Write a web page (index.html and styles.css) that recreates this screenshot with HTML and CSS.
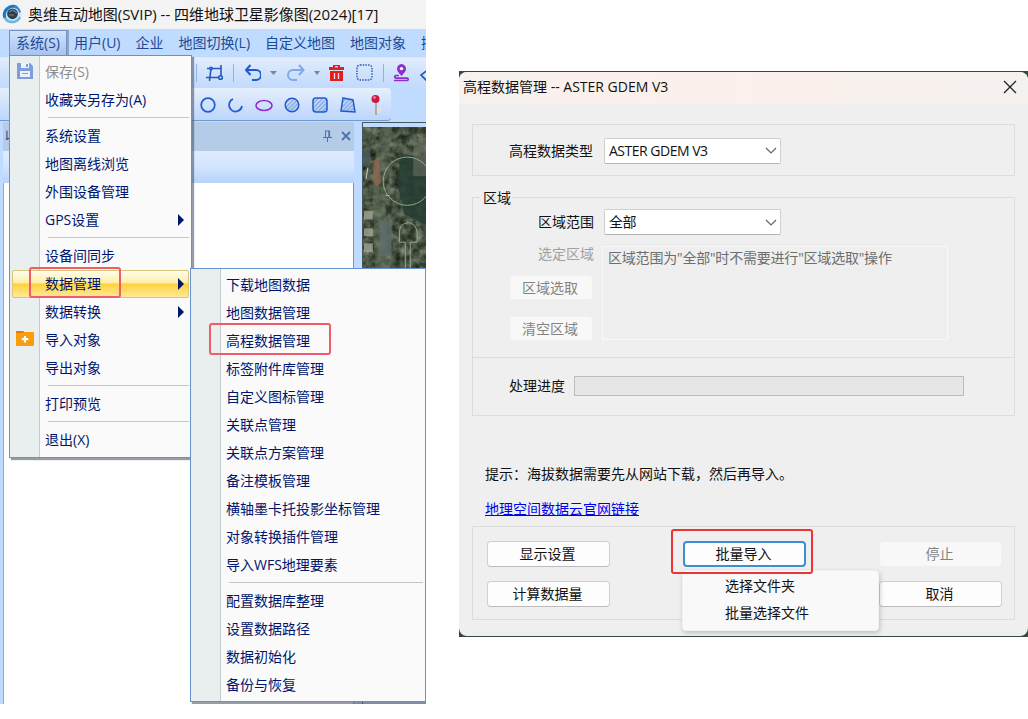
FILE: index.html
```html
<!DOCTYPE html>
<html lang="zh-CN">
<head>
  <meta charset="UTF-8" />
  <title>奥维互动地图</title>
  <link rel="stylesheet" href="styles.css">
</head>
<body>

  <div class="app">
    <header class="titlebar">
      <svg class="logo" width="20" height="20" viewBox="0 0 20 20">
        <circle cx="10" cy="10" r="9.5" fill="#d5e6f2"/>
        <path d="M15 3.500A8.500 8.500 0 0 0 3 14" fill="none" stroke="#1878c8" stroke-width="3"/>
        <path d="M3 14a8.500 8.500 0 0 0 15-1" fill="none" stroke="#69b7e5" stroke-width="2.500"/>
        <path d="M12 2.500q5 1 6 6" fill="none" stroke="#2c8bd2" stroke-width="2"/>
        <circle cx="10.5" cy="9.8" r="5.400" fill="#303f50"/>
        <path d="M7 8l4-2 4 3M7 11h5" fill="none" stroke="#72859a" stroke-width="1.2"/>
      </svg>
      <span>奥维互动地图(SVIP) -- 四维地球卫星影像图(2024)[17]</span>
    </header>

    <nav class="menubar">
      <span class="active">系统(S)</span>
      <span>用户(U)</span>
      <span>企业</span>
      <span>地图切换(L)</span>
      <span>自定义地图</span>
      <span>地图对象</span>
      <span>接</span>
    </nav>

    <div class="toolbar first">
      <i class="split"></i>
      <svg width="18" height="18" viewBox="0 0 18 18" fill="none" stroke="#2459b5" stroke-width="1.6">
        <path d="M1 4.5h14M5 4.5L3.5 17M15 1v13M0 13.500h17"/>
        <circle cx="5" cy="4.500" r="1.200" fill="#dce9fc"/><circle cx="14.500" cy="13.500" r="1.800" fill="#dce9fc"/>
      </svg>
      <i class="split"></i>
      <svg width="18" height="18" viewBox="0 0 18 18" fill="none" stroke="#1f5bd0" stroke-width="2">
        <path d="M7.500 1L3 6l4.500 5M3 6h10a5 5 0 0 1 0 10H9"/>
      </svg>
      <svg width="8" height="5" viewBox="0 0 8 5"><path d="M0 0h7L3.500 4z" fill="#6f86a8"/></svg>
      <svg width="18" height="18" viewBox="0 0 18 18" fill="none" stroke="#80a8ea" stroke-width="2">
        <path d="M12 1l4.500 5-4.500 5M16.500 6H6a5 5 0 0 0 0 10h4"/>
      </svg>
      <svg width="6" height="5" viewBox="0 0 6 5"><path d="M0 0h6L3 4z" fill="#6f86a8"/></svg>
      <svg width="18" height="18" viewBox="0 0 18 18">
        <path d="M0 3h4V1h7v2h4v3H0zM1 7h13v10H1z" fill="#e02020"/>
        <path d="M6 2.800h3" stroke="#dce9fc" stroke-width="1.200"/>
        <path d="M5.500 9v6M9.500 9v6" stroke="#f5dbe0" stroke-width="1.300"/>
      </svg>
      <svg width="18" height="18" viewBox="0 0 18 18">
        <rect x="1" y="1" width="15" height="15" rx="3" fill="none" stroke="#2459b5" stroke-width="1.400" stroke-dasharray="1.500 1.200"/>
      </svg>
      <i class="split"></i>
      <svg width="18" height="18" viewBox="0 0 18 18" fill="none" stroke="#8d2fc9" stroke-width="2">
        <path d="M8.500 0a4.700 4.700 0 0 1 4.500 4.700C13 7.500 11 9 8.500 12 6 9 4 7.500 4 4.700A4.700 4.700 0 0 1 8.500 0z" fill="#8d2fc9" stroke="none"/>
        <circle cx="8.500" cy="4.600" r="1.700" fill="#fff" stroke="none"/>
        <path d="M6 11.500H3a1.300 1.300 0 0 0 0 2.600h11a1 1 0 0 1 0 2.400H1" stroke-width="1.700"/>
      </svg>
      <svg width="18" height="18" viewBox="0 0 18 18"><path d="M9 5L1 11l5 5 8-8" fill="none" stroke="#2459b5" stroke-width="1.600"/></svg>
    </div>

    <div class="toolbar second">
      <svg width="18" height="18" viewBox="0 0 18 18"><circle cx="9" cy="9" r="6.800" fill="none" stroke="#1f5bd0" stroke-width="1.700"/></svg>
      <svg width="18" height="18" viewBox="0 0 18 18"><path d="M6 3A6.500 6.500 0 1 0 15 10" fill="none" stroke="#1f5bd0" stroke-width="1.700"/></svg>
      <svg width="18" height="18" viewBox="0 0 18 18"><ellipse cx="9" cy="9.500" rx="8" ry="5" fill="none" stroke="#8e2fd0" stroke-width="1.600"/></svg>
      <svg width="18" height="18" viewBox="0 0 18 18">
        <defs><pattern id="hatch" width="3" height="3" patternUnits="userSpaceOnUse" patternTransform="rotate(45)"><path d="M1 0v3" stroke="#4f83d6" stroke-width="1"/></pattern></defs>
        <circle cx="9" cy="9" r="6.800" fill="url(#hatch)" stroke="#1f5bd0" stroke-width="1.500"/>
      </svg>
      <svg width="18" height="18" viewBox="0 0 18 18"><rect x="2" y="2" width="14" height="14" rx="3" fill="url(#hatch)" stroke="#1f5bd0" stroke-width="1.500"/></svg>
      <svg width="18" height="18" viewBox="0 0 18 18"><path d="M4 2l10 2 2 12-14-1z" fill="url(#hatch)" stroke="#1f5bd0" stroke-width="1.500"/></svg>
      <svg width="18" height="22" viewBox="0 0 18 22">
        <path d="M9 20l7-4-7-3z" fill="#e3e2e2"/>
        <path d="M9 7v14" stroke="#a98c7c" stroke-width="1.300"/>
        <circle cx="8.500" cy="5" r="4" fill="#cf1740"/><circle cx="7.500" cy="3.500" r="1.200" fill="#f294a6"/>
      </svg>
    </div>

    <div class="workspace">
      <section class="panel">
        <div class="panel-head">
          <span class="panel-title">收</span>
          <svg width="9" height="12" viewBox="0 0 9 12" fill="none" stroke="#4c72b0"><path d="M2 1h5M2.500 1v6M0 7.500h9M4.500 8v4"/><path d="M6.200 1v6" stroke-width="1.800"/></svg>
          <svg width="10" height="10" viewBox="0 0 10 10"><path d="M1 1l8 8M9 1L1 9" stroke="#4c72b0" stroke-width="1.800"/></svg>
        </div>
        <div class="panel-tools"></div>
        <div class="panel-list"></div>
      </section>
      <svg class="map" width="64" height="582" viewBox="0 0 64 582">
        <defs>
          <filter id="ground" x="0" y="0" width="100%" height="100%" color-interpolation-filters="sRGB">
            <feTurbulence type="fractalNoise" baseFrequency="0.13" numOctaves="4" seed="8"/>
            <feColorMatrix values="0.550 0 0 0 0.010  0.550 0 0 0 0.050  0.500 0 0 0 0.010  0 0 0 0 1"/>
          </filter>
        </defs>
        <rect width="64" height="582" filter="url(#ground)"/>
        <path d="M38 28l26 2v70l-22-12-7-30z" fill="#263d33" opacity=".85"/>
        <path d="M18 0h12l-8 60 4 86H12l-2-90z" fill="#677360" opacity=".45"/>
        <path d="M11 34l5-4 2 26-5 6-3-10z" fill="#94674f" opacity=".75"/>
        <path d="M0 24h7v16H0z" fill="#46585e" opacity=".8"/>
        <path d="M51 12h13v38H51z" fill="#77786a" opacity=".5"/>
        <path d="M1 85h9v9H1zM1 103h9v8H1zM1 118h9v9H1z" fill="#a1a494" opacity=".8"/>
        <path d="M17 95h12v36H17z" fill="#5d6d6a" opacity=".85"/>
        <path d="M5 41l-2 12M23 69l4 1" stroke="#ccd0b8"/>
        <g fill="none" stroke="#94a68e">
          <circle cx="45" cy="55" r="24.500"/>
          <path d="M37 117v-10q0-9 9-10q8 1 9 10v10h-7v30M37 117h6v30"/>
        </g>
      </svg>
    </div>

    <ul class="menu main-menu">
      <li class="disabled">
        <svg width="18" height="18" viewBox="0 0 18 18"><path d="M1 1h13l3 3v13H1z" fill="#7d9ddb"/><path d="M5 1h8v5H5zM4 9h10v6H4z" fill="#edf2fa"/><path d="M10 2h2v3h-2zM6 11h6v1H6z" fill="#7d9ddb"/></svg>
        <span>保存(S)</span>
      </li>
      <li><span>收藏夹另存为(A)</span></li>
      <li class="line"></li>
      <li><span>系统设置</span></li>
      <li><span>地图离线浏览</span></li>
      <li><span>外围设备管理</span></li>
      <li class="sub"><span>GPS设置</span></li>
      <li class="line"></li>
      <li><span>设备间同步</span></li>
      <li class="sub selected"><span>数据管理</span></li>
      <li class="sub"><span>数据转换</span></li>
      <li>
        <svg width="18" height="18" viewBox="0 0 18 18"><path d="M0 2q0-1 1-1h6l2 1h8q1 0 1 1v12q0 1-1 1H1q-1 0-1-1z" fill="#f99d0b"/><path d="M0 2q0-1 1-1h6l1 2H0z" fill="#d68112"/><path d="M9 6v6.500M5.800 9.200h6.500" stroke="#fff" stroke-width="2.200"/></svg>
        <span>导入对象</span>
      </li>
      <li><span>导出对象</span></li>
      <li class="line"></li>
      <li><span>打印预览</span></li>
      <li class="line"></li>
      <li><span>退出(X)</span></li>
    </ul>

    <ul class="menu sub-menu">
      <li><span>下载地图数据</span></li>
      <li><span>地图数据管理</span></li>
      <li><span>高程数据管理</span></li>
      <li><span>标签附件库管理</span></li>
      <li><span>自定义图标管理</span></li>
      <li><span>关联点管理</span></li>
      <li><span>关联点方案管理</span></li>
      <li><span>备注模板管理</span></li>
      <li><span>横轴墨卡托投影坐标管理</span></li>
      <li><span>对象转换插件管理</span></li>
      <li><span>导入WFS地理要素</span></li>
      <li class="line"></li>
      <li><span>配置数据库整理</span></li>
      <li><span>设置数据路径</span></li>
      <li><span>数据初始化</span></li>
      <li><span>备份与恢复</span></li>
    </ul>

    <div class="mark mark-data"></div>
    <div class="mark mark-height"></div>
  </div>

  <div class="dialog-back">
    <div class="dialog">
      <header class="dialog-title">
        <span>高程数据管理 -- ASTER GDEM V3</span>
        <svg width="14" height="14" viewBox="0 0 14 14"><path d="M1 1l12 12M13 1L1 13" stroke="#222" stroke-width="1.300"/></svg>
      </header>

      <section class="group type-group">
        <label>高程数据类型</label>
        <div class="select">ASTER GDEM V3<svg width="12" height="7" viewBox="0 0 12 7"><path d="M1 1l5 5 5-5" fill="none" stroke="#666" stroke-width="1.200"/></svg></div>
      </section>

      <section class="group area-group">
        <span class="legend">区域</span>
        <div class="area">
          <label>区域范围</label>
          <div class="select">全部<svg width="12" height="7" viewBox="0 0 12 7"><path d="M1 1l5 5 5-5" fill="none" stroke="#666" stroke-width="1.200"/></svg></div>
          <div class="area-side">
            <label class="grey">选定区域</label>
            <button class="off">区域选取</button>
            <button class="off">清空区域</button>
          </div>
          <div class="area-text">区域范围为"全部"时不需要进行"区域选取"操作</div>
        </div>
        <div class="progress-row">
          <label>处理进度</label>
          <div class="progress"></div>
        </div>
      </section>

      <p class="tip">提示：海拔数据需要先从网站下载，然后再导入。</p>
      <a class="link">地理空间数据云官网链接</a>

      <section class="group buttons">
        <button>显示设置</button>
        <div class="import">
          <button class="focus">批量导入</button>
          <div class="popup">
            <div>选择文件夹</div>
            <div>批量选择文件</div>
          </div>
          <div class="mark mark-import"></div>
        </div>
        <button class="off">停止</button>
        <button>计算数据量</button>
        <span></span>
        <button>取消</button>
      </section>
    </div>
  </div>

</body>
</html>
```
FILE: styles.css
```css
* {
  box-sizing: border-box;
}

body {
  margin: 0;
  background-color: #fff;
  font-family: "Open Sans", "Noto Sans CJK SC", sans-serif;
  font-size: 14px;
  line-height: 20px;
  display: flex;
  align-items: flex-start;
}

svg {
  display: block;
  flex: none;
}

/* main window */

.app {
  position: relative;
  width: 426px;
  height: 704px;
  overflow: hidden;
  background-color: #bfdbff;
  flex: none;
}

.titlebar {
  height: 29px;
  background-color: #f3f3f3;
  display: flex;
  align-items: center;
  gap: 6px;
  padding: 0 0 2px 2px;
  font-size: 15px;
  letter-spacing: -0.04px;
  color: #111;
  white-space: nowrap;
}

.menubar {
  height: 28px;
  display: flex;
  gap: 15px;
  padding: 1px 0 0 9px;
  line-height: 26px;
  color: #1c4a94;
  white-space: nowrap;
}

.menubar span {
  flex: none;
}

.menubar .active {
  width: 58px;
  height: 26px;
  margin-right: -8px;
  padding-left: 6px;
  border: 1px solid #7492c4;
  border-bottom: none;
  background: linear-gradient(#d0e2fb, #a6c3ee);
  box-shadow: 2px 0 0 #8ba4c8;
  line-height: 24px;
}

.toolbar {
  display: flex;
  align-items: center;
  background: linear-gradient(#e2edfd, #d0e2fc 50%, #c2daff);
}

.toolbar.first {
  height: 31px;
  padding-left: 196px;
  gap: 9px;
  border-top: 1px solid #d9e8fd;
}

.toolbar.second {
  height: 33px;
  width: 391px;
  padding: 2px 0 0 199px;
  gap: 10px;
  background: linear-gradient(#e6effd, #cfe1fc 55%, #bdd6fb);
  border-bottom: 1px solid #6f9ad6;
  border-radius: 0 4px 4px 0;
}

.split {
  width: 1px;
  height: 18px;
  background-color: #8eb2e8;
  flex: none;
}

.workspace {
  display: flex;
  justify-content: space-between;
  height: 583px;
  padding: 1px 0 0 3px;
}

.panel {
  width: 351px;
  display: flex;
  flex-direction: column;
}

.panel-head {
  height: 29px;
  display: flex;
  align-items: center;
  gap: 9px;
  padding: 0 3px 2px 2px;
  background-color: #b4cce7;
  color: #1c4a94;
}

.panel-title {
  margin-right: auto;
}

.panel-tools {
  height: 32px;
  background: linear-gradient(#e0ecfe, #d2e4ff 50%, #b7d3fa);
}

.panel-list {
  flex: 1;
  background-color: #fff;
  border-left: 1px solid #8aa9d6;
  border-right: 1px solid #8593a8;
}

.map {
  border-left: 1px solid #47585a;
  border-top: 1px solid #47585a;
}

/* menus */

.menu {
  position: absolute;
  margin: 0;
  padding: 2px;
  list-style: none;
  color: #00156e;
  line-height: 28px;
  background: linear-gradient(to right, #e9eeee 29px, #c5c9cc 29px, #c5c9cc 30px, #fafafa 30px);
  border: 1px solid #6593cf;
  box-shadow: 2px 2px 1px rgba(80, 90, 110, 0.6);
}

.main-menu {
  left: 9px;
  top: 55px;
  width: 183px;
  height: 403px;
}

.sub-menu {
  left: 190px;
  top: 268px;
  width: 236px;
  height: 434px;
}

.menu li {
  height: 28px;
  padding-left: 33px;
  display: flex;
  align-items: center;
  white-space: nowrap;
}

.menu li svg {
  margin: -2px 11px 0 -29px;
}

.menu .line {
  height: 1px;
  margin: 3px 0 4px 36px;
  padding: 0;
  background-color: #c5c5c5;
}

.menu .disabled {
  color: #8d8d8d;
}

.menu .sub::after {
  content: "";
  margin-left: auto;
  margin-right: 5px;
  border: 6px solid transparent;
  border-left-color: #00156e;
  border-right: none;
}

.menu .selected {
  background: linear-gradient(#fffdec, #ffeea8 45%, #ffd23c 50%, #ffe99a);
  border: 1px solid #d9c47c;
  border-radius: 2px;
  padding-left: 32px;
}

.menu .selected::after {
  margin-right: 4px;
}

.mark {
  position: absolute;
  border: 2px solid #f05c6b;
  border-radius: 3px;
}

.mark-data {
  left: 29px;
  top: 267px;
  width: 92px;
  height: 31px;
}

.mark-height {
  left: 209px;
  top: 323px;
  width: 122px;
  height: 32px;
}

/* dialog */

.dialog-back {
  width: 569px;
  height: 566px;
  margin: 71px 0 0 33px;
  padding: 1px 0;
  background-color: #38483f;
  flex: none;
}

.dialog {
  height: 564px;
  background-color: #efefef;
  border-radius: 8px;
  padding: 0 13px;
  color: #111;
}

.dialog-title {
  height: 32px;
  margin: 0 -13px 20px;
  padding: 0 11px 2px 4px;
  display: flex;
  justify-content: space-between;
  align-items: center;
  background: linear-gradient(to right, #f8f1ee, #fbf0eb 50%, #f5f1ef);
  border-radius: 8px 8px 0 0;
}

.group {
  border: 1px solid #dcdcdc;
}

.type-group {
  height: 52px;
  display: flex;
  align-items: center;
  gap: 11px;
  padding: 1px 0 0 36px;
}

.select {
  width: 177px;
  height: 26px;
  padding: 0 3px 0 4px;
  display: flex;
  justify-content: space-between;
  align-items: center;
  background-color: #fff;
  border: 1px solid #d0d0d0;
  border-bottom-color: #b5b5b5;
  border-radius: 2px;
  letter-spacing: -0.5px;
}

.area-group {
  height: 219px;
  margin-top: 21px;
}

.legend {
  display: block;
  width: 32px;
  height: 20px;
  margin: -10px 0 0 7px;
  padding-left: 3px;
  background-color: #efefef;
}

.area {
  height: 150px;
  padding: 1px 0 0 36px;
  display: grid;
  grid-template-columns: 85px 346px;
  grid-template-rows: 27px 94px;
  column-gap: 8px;
  row-gap: 10px;
  border-bottom: 1px solid #dcdcdc;
}

.area label {
  text-align: right;
  line-height: 26px;
}

.area .select {
  margin-left: 2px;
}

.area-side {
  display: flex;
  flex-direction: column;
}

.area-side label {
  line-height: 17px;
  margin-bottom: 13px;
}

.area .grey {
  color: #a0a0a0;
  line-height: 16px;
}

.area-text {
  border: 1px solid #f8f8f8;
  padding: 1px 5px;
  color: #6d6d6d;
  letter-spacing: -0.2px;
}

.progress-row {
  display: flex;
  align-items: center;
  gap: 9px;
  height: 56px;
  padding-left: 36px;
}

.progress {
  width: 390px;
  height: 20px;
  background-color: #e6e6e6;
  border: 1px solid #bcbcbc;
}

.tip {
  margin: 48px 0 0 13px;
}

.link {
  display: block;
  width: 154px;
  margin: 15px 0 0 13px;
  color: #0000f0;
  text-decoration: underline;
}

button {
  height: 26px;
  padding: 0 2px 0 0;
  font: inherit;
  color: #111;
  background-color: #fdfdfd;
  border: 1px solid #d0d0d0;
  border-bottom-color: #bcbcbc;
  border-radius: 4px;
}

button.off {
  color: #838383;
  background-color: #f8f8f8;
  border-color: #f0f0f0;
}

.area-side button {
  width: 84px;
  height: 25px;
  flex: none;
  margin-bottom: 16px;
}

.buttons {
  height: 94px;
  margin-top: 7px;
  padding: 14px;
  display: grid;
  grid-template-columns: 123px 123px 123px;
  grid-template-rows: 26px 26px;
  column-gap: 73px;
  row-gap: 14px;
}

.import {
  position: relative;
}

.import button {
  width: 123px;
}

button.focus {
  border: 2px solid #3d8ed2;
}

.popup {
  position: absolute;
  left: -1px;
  top: 29px;
  width: 197px;
  height: 61px;
  padding: 1px 0 0 42px;
  line-height: 27px;
  background-color: #f9f9f9;
  border: 1px solid #f2f2f2;
  border-radius: 4px;
  box-shadow: 1px 2px 5px rgba(0, 0, 0, 0.2);
}

.mark-import {
  left: -12px;
  top: -12px;
  width: 142px;
  height: 45px;
  border-color: #ed3434;
}
```
